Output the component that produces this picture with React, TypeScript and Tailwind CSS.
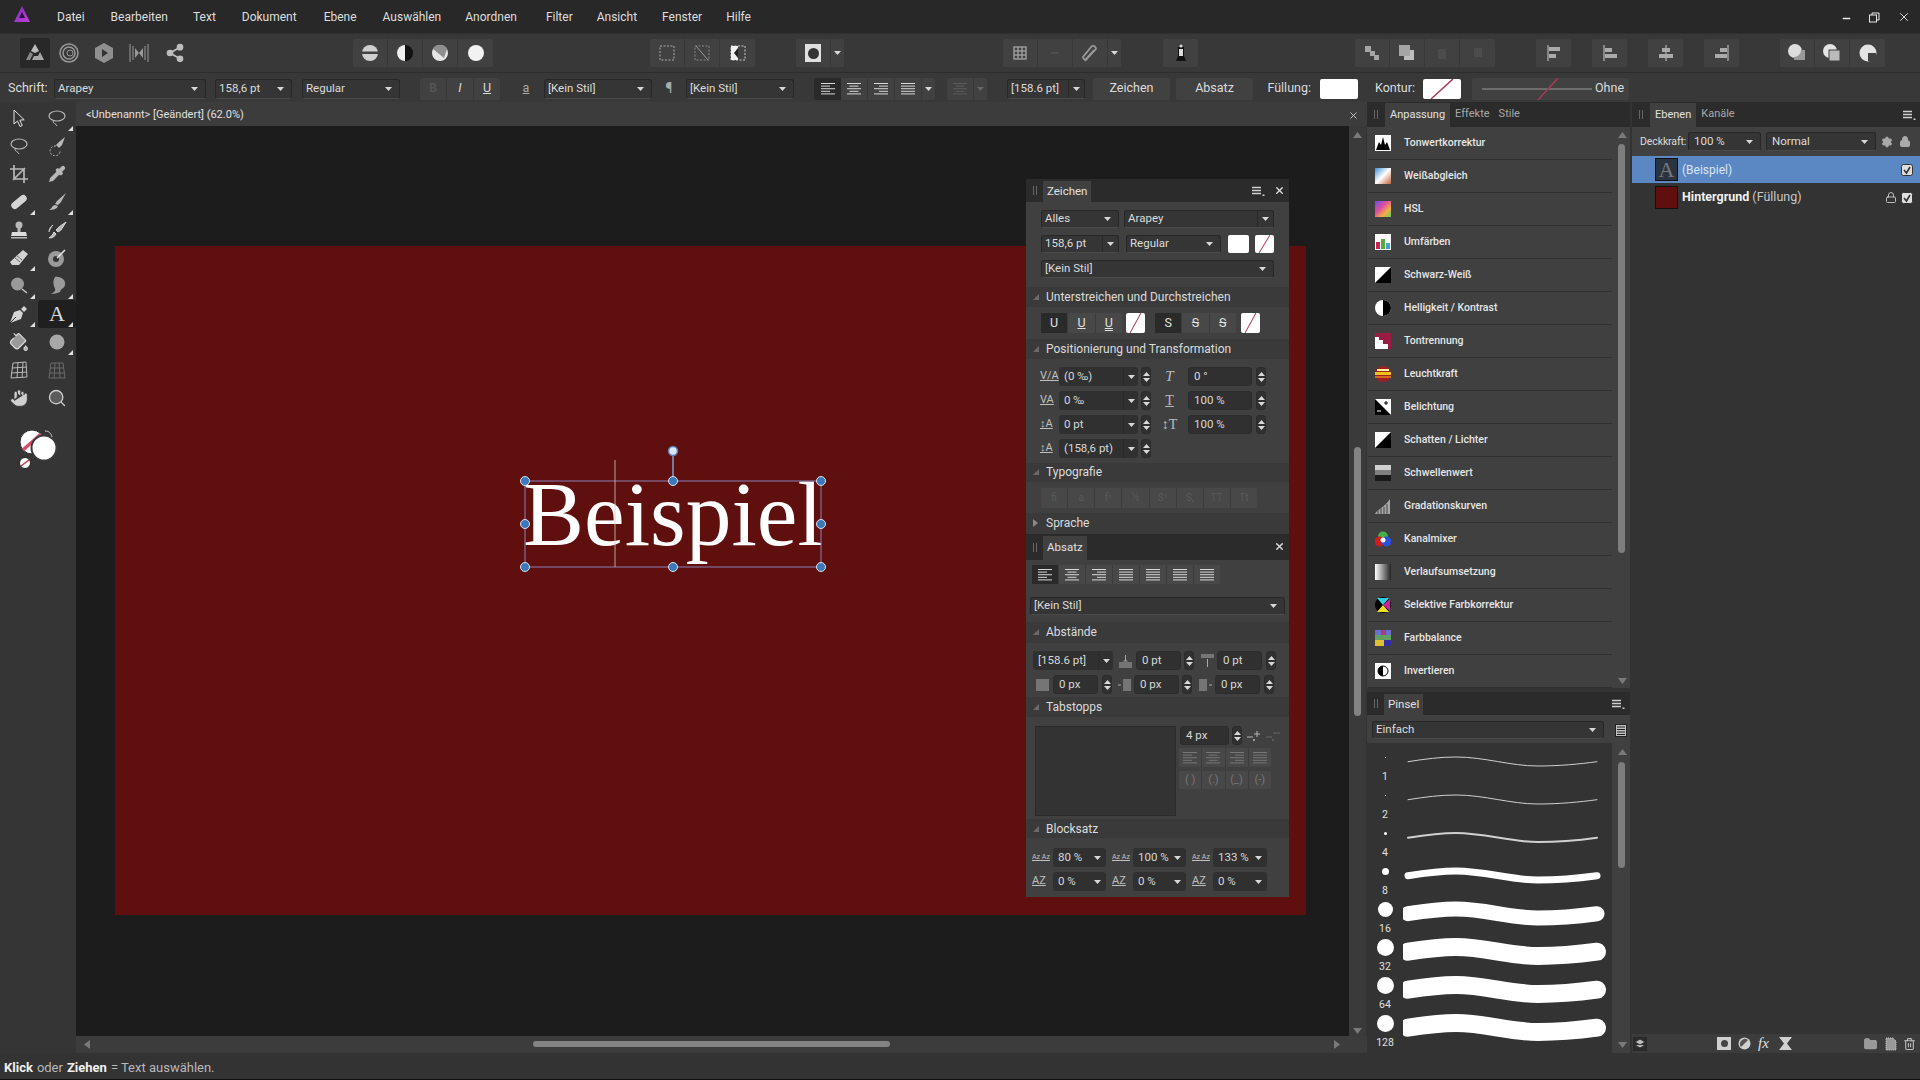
import type { ReactNode } from 'react';
import { Share2, Pipette, PaintBucket, Hand, Search, Lock, Settings, Trash2, Folder, X, Minus } from 'lucide-react';

function Caret({ className = 'text-[#d8d8d8]' }: { className?: string }) {
  return (
    <svg width="7" height="4" viewBox="0 0 7 4" className={`shrink-0 ${className}`}>
      <path d="M0 0h7L3.5 4z" fill="currentColor" />
    </svg>
  );
}

function MenuIc({ className }: { className: string }) {
  return (
    <svg width="13" height="11" viewBox="0 0 13 11" className={`shrink-0 ${className}`}>
      <path d="M0 1.500h9M0 4.500h9M0 7.500h9" stroke="#cfcfcf" strokeWidth="1.500" />
      <rect x="10.500" y="8.500" width="2" height="1.500" fill="#cfcfcf" />
    </svg>
  );
}

function Slash() {
  return (
    <svg viewBox="0 0 38 20" preserveAspectRatio="none" className="w-full h-full">
      <line x1="8" y1="20" x2="30" y2="0" stroke="#a93a55" strokeWidth="1.5" />
    </svg>
  );
}

function Swatch({ className, slash }: { className: string; slash?: boolean }) {
  return <div className={`bg-white rounded-[2px] shrink-0 overflow-hidden ${className}`}>{slash && <Slash />}</div>;
}

function Select({ className, children, split, h = 'h-[20px]' }: { className: string; children: ReactNode; split?: boolean; h?: string }) {
  return (
    <div className={`${className} ${h} shrink-0 flex items-center justify-between bg-[#353535] border border-[#272727] border-b-[#4a4a4a] rounded-[3px] pl-[3px] text-[11.500px] text-[#dcdcdc]`}>
      <span className="whitespace-nowrap">{children}</span>
      {split ? (
        <span className="h-full w-[16px] border-l border-[#2a2a2a] flex items-center justify-center">
          <Caret />
        </span>
      ) : (
        <span className="pr-[7px] flex">
          <Caret />
        </span>
      )}
    </div>
  );
}

function Field({ className, children }: { className: string; children: ReactNode }) {
  return (
    <div className={`${className} h-[19px] shrink-0 flex items-center bg-[#303030] rounded-[3px] border border-[#2c2c2c] pl-[5px] text-[11.500px] text-[#d8d8d8] whitespace-nowrap`}>
      {children}
    </div>
  );
}

function Spin({ className = '' }: { className?: string }) {
  return (
    <div className={`${className} w-[10px] h-[19px] shrink-0 bg-[#303030] rounded-[3px] border border-[#2c2c2c] flex flex-col items-center justify-center gap-[2px]`}>
      <Caret className="text-[#d8d8d8] rotate-180" />
      <Caret />
    </div>
  );
}

function ToolBtn({ children, w = 'w-[35px]' }: { children?: ReactNode; w?: string }) {
  return <div className={`${w} h-full border-r border-[#383838] last:border-r-0 flex items-center justify-center`}>{children}</div>;
}

function ToolGroup({ className = '', children }: { className?: string; children: ReactNode }) {
  return <div className={`${className} h-[28px] flex bg-[#414141] rounded-[2px] shrink-0`}>{children}</div>;
}

function Lines({ type = 'left', color = '#d8d8d8' }: { type?: 'left' | 'center' | 'right' | 'full'; color?: string }) {
  const ws = type === 'full' ? [14, 14, 14, 14, 14] : [14, 9, 14, 9, 14];
  return (
    <svg width="14" height="12" viewBox="0 0 14 12">
      {ws.map((w, i) => {
        const x = type === 'left' || type === 'full' ? 0 : type === 'center' ? (14 - w) / 2 : 14 - w;
        return <rect key={i} x={x} y={i * 2.6} width={w} height="1" fill={color} />;
      })}
    </svg>
  );
}

function Section({ title, className = 'h-[20px]', closed }: { title: string; className?: string; closed?: boolean }) {
  return (
    <div className={`${className} bg-[#3a3a3a] flex items-center text-[12px] text-[#dcdcdc]`}>
      <span className="w-[20px] flex justify-start pl-[7px]">
        {closed ? (
          <svg width="5" height="8" viewBox="0 0 5 8"><path d="M0 0l5 4-5 4z" fill="#8a8a8a" /></svg>
        ) : (
          <svg width="6" height="6" viewBox="0 0 6 6"><path d="M6 0v6H0z" fill="#6a6a6a" /></svg>
        )}
      </span>
      {title}
    </div>
  );
}

function Grip({ w = 'w-[19px]' }: { w?: string }) {
  return (
    <span className={`${w} h-full flex items-center justify-center gap-[2px] shrink-0`}>
      <span className="w-px h-[9px] bg-[#666]" />
      <span className="w-px h-[9px] bg-[#666]" />
    </span>
  );
}

function PanelHead({ title, close, menu }: { title: string; close?: boolean; menu?: string }) {
  return (
    <div className="h-[23px] bg-[#2b2b2b] flex items-end shrink-0">
      <Grip w="w-[17px]" />
      <div className="h-[21px] px-[4px] bg-[#404040] text-[11.500px] text-[#e0e0e0] flex items-center">{title}</div>
      <div className="flex-1" />
      {menu && <MenuIc className={menu} />}
      {close && <X className="w-[11px] h-[11px] text-[#dddddd] mb-[6px] mr-[4px]" strokeWidth={3} />}
    </div>
  );
}

const F = '#b8b8b8';

function Tool({ icon, corner, active }: { icon: ReactNode; corner?: boolean; active?: boolean }) {
  return (
    <div className={`relative w-[38px] h-[28px] flex items-center justify-center ${active ? 'bg-[#1f1f1f] rounded-[3px]' : ''}`}>
      {icon}
      {corner && <span className="absolute right-[3px] bottom-[1px] w-0 h-0 border-l-[5px] border-l-transparent border-b-[5px] border-b-[#e0e0e0]" />}
    </div>
  );
}

const Ic = ({ children }: { children: ReactNode }) => (
  <svg width="20" height="20" viewBox="0 0 20 20" fill="none">{children}</svg>
);

const tools: { icon: ReactNode; corner?: boolean; active?: boolean }[] = [
  { icon: <Ic><path d="M5 2v14l3.5-3 2.5 5.5 2.3-1-2.5-5.300 4.400-.4z" fill="#333" stroke="#e4e4e4" /></Ic> },
  { icon: <Ic><ellipse cx="10" cy="8" rx="8" ry="5" stroke={F} strokeWidth="1.200" /><path d="M6 13c0 3 3 2 4 5" stroke={F} /></Ic>, corner: true },
  { icon: <Ic><ellipse cx="10" cy="8" rx="8" ry="5" stroke={F} strokeWidth="1.200" /><path d="M6 13c0 3 3 2 4 5" stroke={F} /></Ic> },
  { icon: <Ic><path d="M18 1l-3 8-3 3-3-3 3-3z" fill={F} /><path d="M9 10a5 5 0 1 0 4 4" stroke={F} strokeDasharray="2 1.500" /></Ic> },
  { icon: <Ic><path d="M5 1v14h14M1 5h14v14M4 16L16 4" stroke={F} strokeWidth="1.700" /></Ic> },
  { icon: <Pipette className="w-[18px] h-[18px] text-[#b8b8b8]" fill="#b8b8b8" strokeWidth={1.4} /> },
  { icon: <Ic><rect x="1" y="6.500" width="18" height="7" rx="3.500" fill="#d4d4d4" transform="rotate(-40 10 10)" /></Ic>, corner: true },
  { icon: <Ic><path d="M19 1L10 9l-2 3 3 1 3-3zM8 13l3 1c-1 3-5 4-9 4 3-1 3-5 6-5z" fill={F} /></Ic>, corner: true },
  { icon: <Ic><circle cx="10" cy="5" r="3.500" fill={F} /><rect x="8.500" y="7" width="3" height="5" fill={F} /><path d="M3 12h14l1 4H2z" fill="#dcdcdc" /><rect x="2" y="17" width="16" height="1.500" fill={F} /></Ic> },
  { icon: <Ic><path d="M19 2l-7 5-3 3 2 2 3-2zM6 5C3 7 2 10 2 12M2 18c4 0 6-2 7-4l-2-2c-1 3-3 4-5 6z" stroke="#ddd" fill={F} /></Ic> },
  { icon: <Ic><path d="M14 2l5 4-9 11-7 0-2-3z" fill="#d4d4d4" /><path d="M5 9l6 5M7 7l6 5" stroke="#666" /></Ic>, corner: true },
  { icon: <Ic><circle cx="9" cy="11" r="8" fill="#9a9a9a" /><circle cx="9" cy="11" r="3" fill="#333" /><path d="M10 10l8-8" stroke="#e4e4e4" strokeWidth="1.500" /></Ic> },
  { icon: <Ic><circle cx="8.500" cy="8" r="6.500" fill="#9a9a9a" /><path d="M13 13l5 4" stroke="#ccc" strokeWidth="1.400" /></Ic>, corner: true },
  { icon: <Ic><path d="M8 1c6-1 11 3 10 8-1 4-4 3-5 7-3 1-5 2-9 2 3-2 5-3 4-5-1-3-3-7 0-12z" fill="#9a9a9a" /></Ic>, corner: true },
  { icon: <Ic><path d="M1 19l4-11 6-2 3 3-2 6zM12 5l3-3 3 3-3 3z" fill="#d4d4d4" /><path d="M1 19l6-6" stroke="#333" /></Ic>, corner: true },
  { icon: <span className="text-[22px] leading-none text-[#d8d8d8] font-['Liberation_Serif',serif]">A</span>, corner: true, active: true },
  { icon: <PaintBucket className="w-[20px] h-[20px] text-[#dcdcdc]" fill="#9a9a9a" strokeWidth={1.4} /> },
  { icon: <Ic><circle cx="10" cy="10" r="7.500" fill="#a8a8a8" /></Ic>, corner: true },
  { icon: <Ic><path d="M4 3l13-1 1 15-16 1zM9 2.500L8 18M14 2l-1 16M3 8l15-1M2 13l16-1" stroke={F} /></Ic> },
  { icon: <Ic><path d="M4 3h12l2 15H2zM8 3l-1 15M12 3l1 15M3 8h14M2.500 13h15" stroke="#6a6a6a" /></Ic> },
  { icon: <Hand className="w-[20px] h-[20px] text-[#333]" fill="#cfcfcf" strokeWidth={1} /> },
  { icon: <Search className="w-[20px] h-[20px] text-[#cfcfcf]" fill="#5b5b5b" strokeWidth={1.6} /> },
];

const menus: [string, string][] = [
  ['Datei', 'ml-[57px]'],
  ['Bearbeiten', 'ml-[26px]'],
  ['Text', 'ml-[25px]'],
  ['Dokument', 'ml-[26px]'],
  ['Ebene', 'ml-[27px]'],
  ['Auswählen', 'ml-[26px]'],
  ['Anordnen', 'ml-[24px]'],
  ['Filter', 'ml-[29px]'],
  ['Ansicht', 'ml-[24px]'],
  ['Fenster', 'ml-[25px]'],
  ['Hilfe', 'ml-[24px]'],
];

function MenuBar() {
  return (
    <div className="relative h-[33px] bg-[#282828] flex items-center pt-[1px] text-[12px] text-[#dedede] shrink-0">
      <svg width="18" height="18" viewBox="0 0 18 18" className="absolute left-[13px] top-[6px]">
        <defs>
          <linearGradient id="logo" x1="0" y1="0" x2="1" y2="1">
            <stop offset="0" stopColor="#7a2fb8" />
            <stop offset="1" stopColor="#c040d8" />
          </linearGradient>
        </defs>
        <path d="M9 0l8 16H1z" fill="url(#logo)" />
        <path d="M9 6l3 6H6z" fill="#2f123f" />
      </svg>
      {menus.map(([m, c]) => (
        <span key={m} className={c}>{m}</span>
      ))}
      <div className="ml-auto flex items-center text-[#e8e8e8]">
        <Minus className="w-[11px] h-[11px] mr-[17px] mt-[3px]" strokeWidth={3} />
        <svg width="11" height="11" viewBox="0 0 11 11" className="mr-[17px]" fill="none" stroke="currentColor">
          <rect x="0.500" y="3" width="7" height="7" />
          <path d="M3 3V1h7v7H8" />
        </svg>
        <X className="w-[14px] h-[14px] mr-[9px]" strokeWidth={1.6} />
      </div>
    </div>
  );
}

function ToolBar() {
  const Shape = ({ children }: { children: ReactNode }) => (
    <svg width="22" height="22" viewBox="0 0 22 22" fill="none">{children}</svg>
  );
  return (
    <div className="h-[40px] bg-[#383838] border-t border-[#2f2f2f] border-b border-b-[#2d2d2d] flex items-center pl-[17px] shrink-0">
      <div className="h-[30px] flex shrink-0 items-center">
        <div className="w-[35px] h-full flex items-center justify-center">
          <div className="w-[30px] h-[30px] bg-[#282828] rounded-[2px] flex items-center justify-center">
            <Shape>
              <path d="M11 2l4 7-4 2-4-2z" fill="#bbb" />
              <path d="M6 10l3 2-3 6H2z" fill="#888" />
              <path d="M16 10l4 8H8l2-4h4z" fill="#a8a8a8" />
            </Shape>
          </div>
        </div>
        <ToolBtn><Shape><circle cx="11" cy="11" r="9" stroke="#999" strokeWidth="1.500" /><circle cx="11" cy="11" r="6" stroke="#999" strokeWidth="1.500" /><circle cx="12" cy="11" r="3" stroke="#999" /></Shape></ToolBtn>
        <ToolBtn><Shape><path d="M11 1l9 5v10l-9 5-9-5V6z" fill="#8f8f8f" /><path d="M9 7l6 4-6 4z" fill="#333" /></Shape></ToolBtn>
        <ToolBtn><Shape><path d="M2 2v18M5 4v14M17 4v14M20 2v18" stroke="#999" /><path d="M7 6l4 5 4-5v10l-4-5-4 5z" fill="#999" /></Shape></ToolBtn>
        <ToolBtn><Share2 className="w-[20px] h-[20px] text-[#bdbdbd]" fill="#bdbdbd" /></ToolBtn>
      </div>

      <ToolGroup className="ml-[161px]">
        <ToolBtn><Shape><circle cx="11" cy="11" r="8" fill="#cfcfcf" /><rect x="3" y="9.500" width="16" height="2.500" fill="#414141" /></Shape></ToolBtn>
        <ToolBtn><Shape><circle cx="11" cy="11" r="8" fill="#111" /><path d="M11 3a8 8 0 0 0 0 16z" fill="#eee" /></Shape></ToolBtn>
        <ToolBtn><Shape><circle cx="11" cy="11" r="8" fill="#e6e6e6" /><path d="M4 7a8 8 0 0 1 14 0l-3 9z" fill="#8f8f8f" /></Shape></ToolBtn>
        <ToolBtn><Shape><circle cx="11" cy="11" r="8" fill="#f2f2f2" /></Shape></ToolBtn>
      </ToolGroup>

      <ToolGroup className="ml-[157px]">
        <ToolBtn><Shape><rect x="4" y="4" width="14" height="14" stroke="#aaa" strokeDasharray="2 1.500" /></Shape></ToolBtn>
        <ToolBtn><Shape><rect x="4" y="4" width="14" height="14" stroke="#888" strokeDasharray="2 1.500" /><path d="M5 4l12 14" stroke="#999" /></Shape></ToolBtn>
        <ToolBtn><Shape><rect x="4" y="4" width="14" height="14" stroke="#ccc" strokeDasharray="2 1.500" /><path d="M4 4h7v14H4z" fill="#f0f0f0" /><path d="M11 6l-4 5 4 5z" fill="#222" /></Shape></ToolBtn>
      </ToolGroup>

      <ToolGroup className="ml-[41px]">
        <ToolBtn><div className="w-[16px] h-[18px] bg-[#e0e0e0] flex items-center justify-center"><div className="w-[11px] h-[11px] rounded-full bg-[#333]" /></div></ToolBtn>
        <ToolBtn w="w-[13px]"><Caret /></ToolBtn>
      </ToolGroup>

      <ToolGroup className="ml-[159px]">
        <ToolBtn><Shape><path d="M5 5h12v12H5zM9 5v12M13 5v12M5 9h12M5 13h12" stroke="#999" strokeWidth="1.500" /></Shape></ToolBtn>
        <ToolBtn><Shape><path d="M7 11h8" stroke="#555" strokeWidth="1.500" /></Shape></ToolBtn>
        <ToolBtn><Shape><path d="M6 19L17 7a3 3 0 0 0-4-3L4 15a2 2 0 0 0 3 2l8-9" stroke="#999" strokeWidth="1.800" /></Shape></ToolBtn>
        <ToolBtn w="w-[13px]"><Caret /></ToolBtn>
      </ToolGroup>

      <ToolGroup className="ml-[42px]">
        <ToolBtn><Shape><path d="M8 5h6v9l2 5H6l2-5z" fill="#111" /><rect x="9" y="7" width="4" height="7" fill="#ddd" /><circle cx="11" cy="4" r="1.500" fill="#ddd" /></Shape></ToolBtn>
      </ToolGroup>

      <ToolGroup className="ml-[157px]">
        <ToolBtn><Shape><path d="M4 4h6v6H4zM9 9h5v5H9zM13 13h5v5h-5z" fill="#a5a5a5" /></Shape></ToolBtn>
        <ToolBtn><Shape><path d="M3 3h11v11H3z" fill="#a5a5a5" /><path d="M14 8h4v10H8v-4h6z" fill="#bdbdbd" /></Shape></ToolBtn>
        <ToolBtn><Shape><rect x="7" y="7" width="8" height="10" fill="#4c4c4c" /></Shape></ToolBtn>
        <ToolBtn><Shape><rect x="7" y="6" width="8" height="9" fill="#4c4c4c" /></Shape></ToolBtn>
      </ToolGroup>

      {[
        <><path d="M5 3v16" stroke="#ccc" /><path d="M6 5h11v4H6zM6 12h7v4H6z" fill="#aaa" /></>,
        <><path d="M5 3v16" stroke="#ccc" /><path d="M6 6h7v4H6zM6 12h12v4H6z" fill="#aaa" /></>,
        <><path d="M11 3v16" stroke="#ccc" /><path d="M7 6h8v4H7zM4 12h14v4H4z" fill="#aaa" /></>,
        <><path d="M17 3v16" stroke="#ccc" /><path d="M9 6h7v4H9zM4 12h12v4H4z" fill="#aaa" /></>,
      ].map((s, i) => (
        <ToolGroup key={i} className={i === 0 ? 'ml-[41px]' : 'ml-[21px]'}>
          <ToolBtn><Shape>{s}</Shape></ToolBtn>
        </ToolGroup>
      ))}

      <ToolGroup className="ml-[41px]">
        <ToolBtn><Shape><circle cx="9" cy="9" r="7" fill="#ddd" /><path d="M15 8h4v10H8v-3a7 7 0 0 0 7-7z" fill="#999" /></Shape></ToolBtn>
        <ToolBtn><Shape><circle cx="9" cy="9" r="7" fill="#e4e4e4" /><rect x="8" y="8" width="11" height="11" fill="#bbb" stroke="#414141" /></Shape></ToolBtn>
        <ToolBtn><Shape><circle cx="11" cy="11" r="8.500" fill="#e4e4e4" /><path d="M11 11h8v8h-8z" fill="#414141" /></Shape></ToolBtn>
      </ToolGroup>
    </div>
  );
}

function ContextBar() {
  return (
    <div className="h-[29px] bg-[#383838] flex items-center pl-[8px] pt-[2px] text-[12.500px] text-[#dcdcdc] shrink-0">
      <span className="w-[46px]">Schrift:</span>
      <Select className="w-[152px]">Arapey</Select>
      <Select className="w-[77px] ml-[9px]">158,6 pt</Select>
      <Select className="w-[98px] ml-[10px]">Regular</Select>
      <div className="ml-[20px] w-[80px] h-[22px] flex bg-[#414141] rounded-[2px] shrink-0">
        <div className="flex-1 flex items-center justify-center text-[#555] font-bold">B</div>
        <div className="flex-1 flex items-center justify-center border-x border-[#383838] italic">I</div>
        <div className="flex-1 flex items-center justify-center underline">U</div>
      </div>
      <span className="ml-[20px] w-[12px] text-center underline text-[#aaa]">a</span>
      <Select className="w-[108px] ml-[12px]">[Kein Stil]</Select>
      <span className="w-[34px] text-center text-[#aaa] text-[14px]">¶</span>
      <Select className="w-[108px]">[Kein Stil]</Select>
      <div className="ml-[20px] w-[121px] h-[22px] flex bg-[#414141] rounded-[2px] shrink-0">
        <div className="w-[27px] bg-[#2a2a2a] flex items-center justify-center rounded-l-[2px]"><Lines /></div>
        <div className="w-[27px] flex items-center justify-center border-r border-[#383838]"><Lines type="center" /></div>
        <div className="w-[27px] flex items-center justify-center border-r border-[#383838]"><Lines type="right" /></div>
        <div className="w-[27px] flex items-center justify-center border-r border-[#383838]"><Lines type="full" /></div>
        <div className="flex-1 flex items-center justify-center"><Caret /></div>
      </div>
      <div className="ml-[12px] w-[40px] h-[22px] flex bg-[#414141] rounded-[2px] shrink-0">
        <div className="w-[27px] flex items-center justify-center border-r border-[#383838]"><Lines type="center" color="#5c5c5c" /></div>
        <div className="flex-1 flex items-center justify-center"><Caret className="text-[#666]" /></div>
      </div>
      <Select className="w-[78px] ml-[20px]" split>[158.6 pt]</Select>
      <div className="ml-[8px] w-[77px] h-[22px] bg-[#414141] rounded-[2px] flex items-center justify-center shrink-0">Zeichen</div>
      <div className="ml-[6px] w-[77px] h-[22px] bg-[#414141] rounded-[2px] flex items-center justify-center shrink-0">Absatz</div>
      <span className="w-[67px] text-right pr-[9px] shrink-0">Füllung:</span>
      <Swatch className="w-[38px] h-[20px]" />
      <span className="ml-[17px] w-[48px] shrink-0">Kontur:</span>
      <Swatch className="w-[38px] h-[20px]" slash />
      <div className="ml-[11px] w-[157px] h-[22px] bg-[#414141] rounded-[2px] flex items-center pl-[10px] gap-[3px] shrink-0">
        <svg width="110" height="22" viewBox="0 0 110 22" className="shrink-0">
          <line x1="0" y1="11" x2="110" y2="11" stroke="#999" />
          <line x1="56" y1="22" x2="76" y2="0" stroke="#a93a55" strokeWidth="1.500" />
        </svg>
        Ohne
      </div>
    </div>
  );
}

function ToolsColumn() {
  return (
    <div className="w-[76px] shrink-0 bg-[#353535] pt-[2px]">
      <div className="grid grid-cols-2">
        {tools.map((t, i) => (
          <Tool key={i} {...t} />
        ))}
      </div>
      <svg width="60" height="52" viewBox="0 0 60 52" className="mt-[18px] ml-[12px]">
        <circle cx="20" cy="12" r="12" fill="#fff" stroke="#2b2b2b" />
        <path d="M11 20L29 4" stroke="#d0506a" strokeWidth="3.500" />
        <circle cx="32" cy="18" r="12.500" fill="#fff" stroke="#3a3a3a" strokeWidth="2" />
        <circle cx="13" cy="33" r="5.500" fill="#fff" stroke="#222" />
        <path d="M9 36l8-6" stroke="#b93b52" strokeWidth="1.500" />
        <path d="M33 1c4 0 6 2 7 6" stroke="#cfcfcf" fill="none" />
      </svg>
    </div>
  );
}

function CharacterPanel() {
  const rows: [ReactNode, string, string?, ReactNode?][] = [
    ['V/A', '(0 ‰)', '0 °', <span className="italic font-['Liberation_Serif',serif] text-[15px]">T</span>],
    ['VA', '0 ‰', '100 %', <span className="underline font-['Liberation_Serif',serif] text-[14px]">T</span>],
    ['↕A', '0 pt', '100 %', <span className="font-['Liberation_Serif',serif] text-[14px]">↕T</span>],
    ['↕A', '(158,6 pt)'],
  ];
  const typo = ['fi', 'a', 'f¹', '½', 'S¹', 'S,', 'TT', 'Tt'];
  return (
    <div className="absolute left-[950px] top-[53px] w-[263px] bg-[#404040]">
      <PanelHead title="Zeichen" close menu="mb-[5px] mr-[9px]" />
      <div className="pl-[15px] pr-[15px] pt-[8px] h-[85px]">
        <div className="flex">
          <Select className="w-[78px]" h="h-[18px]">Alles</Select>
          <Select className="w-[150px] ml-[5px]" h="h-[18px]" split>Arapey</Select>
        </div>
        <div className="flex mt-[7px] items-center">
          <Select className="w-[78px]" h="h-[18px]" split>158,6 pt</Select>
          <Select className="w-[95px] ml-[7px]" h="h-[18px]">Regular</Select>
          <Swatch className="w-[21px] h-[18px] ml-[7px]" />
          <Swatch className="w-[19px] h-[18px] ml-[6px]" slash />
        </div>
        <div className="mt-[7px]"><Select className="w-[233px]" h="h-[18px]">[Kein Stil]</Select></div>
      </div>
      <Section title="Unterstreichen und Durchstreichen" />
      <div className="h-[32px] flex items-center pl-[15px]">
        <div className="h-[20px] w-[81px] flex bg-[#484848] rounded-[2px] text-[12.500px] text-[#e0e0e0] shrink-0">
          <div className="flex-1 bg-[#2a2a2a] flex items-center justify-center">U</div>
          <div className="flex-1 border-x border-[#3c3c3c] flex items-center justify-center underline">U</div>
          <div className="flex-1 flex items-center justify-center underline decoration-double">U</div>
        </div>
        <Swatch className="w-[19px] h-[20px] ml-[4px]" slash />
        <div className="h-[20px] w-[81px] ml-[10px] flex bg-[#484848] rounded-[2px] text-[12.500px] text-[#e0e0e0] shrink-0">
          <div className="flex-1 bg-[#2a2a2a] flex items-center justify-center">S</div>
          <div className="flex-1 border-x border-[#3c3c3c] flex items-center justify-center line-through">S</div>
          <div className="flex-1 flex items-center justify-center line-through">S</div>
        </div>
        <Swatch className="w-[19px] h-[20px] ml-[5px]" slash />
      </div>
      <Section title="Positionierung und Transformation" />
      <div className="h-[104px] pt-[8px] pl-[14px] flex flex-col gap-[5px]">
        {rows.map(([ic, v, v2, ic2], i) => (
          <div key={i} className="flex items-center">
            <span className="w-[19px] text-[11px] text-[#c0c0c0] whitespace-nowrap underline">{ic}</span>
            <div className="w-[79px] h-[19px] bg-[#303030] rounded-[3px] flex items-center justify-between pl-[5px] text-[11.500px] text-[#d8d8d8] shrink-0">
              {v}
              <span className="w-[15px] h-full border-l border-[#2a2a2a] flex items-center justify-center"><Caret /></span>
            </div>
            <Spin className="ml-[3px]" />
            {v2 && (
              <>
                <span className="w-[37px] text-center text-[#bbb] text-[12px] leading-none">{ic2}</span>
                <Field className="w-[64px]">{v2}</Field>
                <Spin className="ml-[4px]" />
              </>
            )}
          </div>
        ))}
      </div>
      <Section title="Typografie" className="h-[19px] pb-[2px]" />
      <div className="h-[31px] flex items-center pl-[15px]">
        <div className="h-[20px] w-[216px] flex bg-[#484848] rounded-[2px] text-[10px] text-[#5a5a5a]">
          {typo.map(t => (
            <div key={t} className="flex-1 border-r border-[#3c3c3c] last:border-r-0 flex items-center justify-center">{t}</div>
          ))}
        </div>
      </div>
      <Section title="Sprache" className="h-[21px] pb-[1px]" closed />
    </div>
  );
}

function SpaceIc({ kind }: { kind: 'before' | 'after' | 'leading' | 'left' | 'right' }) {
  return (
    <svg width="15" height="14" viewBox="0 0 15 14">
      {kind === 'before' && <><path d="M1 9h13M1 11h13M1 13h13" stroke="#aaa" /><path d="M7.500 1v6M5.500 7h4" stroke="#aaa" /></>}
      {kind === 'after' && <><path d="M1 1h13M1 3h13" stroke="#aaa" /><path d="M7.500 5v8" stroke="#aaa" /></>}
      {kind === 'leading' && <path d="M1 2h13M1 4h13M1 6h13M1 8h13M1 10h13M1 12h13" stroke="#aaa" />}
      {kind === 'left' && <><path d="M6 2h8M6 4h8M6 6h8M6 8h8M6 10h8M6 12h8" stroke="#aaa" /><path d="M1 7h3" stroke="#aaa" /></>}
      {kind === 'right' && <><path d="M1 2h8M1 4h8M1 6h8M1 8h8M1 10h8M1 12h8" stroke="#aaa" /><path d="M11 7h3" stroke="#aaa" /></>}
    </svg>
  );
}

function ParagraphPanel() {
  const aligns: ('left' | 'center' | 'right' | 'full')[] = ['left', 'center', 'right', 'full', 'full', 'full', 'full'];
  const IconCell = ({ children }: { children: ReactNode }) => (
    <span className="w-[18px] h-[16px] flex items-center justify-center shrink-0">{children}</span>
  );
  const Az = ({ text }: { text: string }) => (
    <span className={`w-[21px] ${text === 'AZ' ? 'text-[11px]' : 'text-[7px]'} text-[#c0c0c0] underline shrink-0 whitespace-nowrap`}>{text}</span>
  );
  const Drop = ({ className, children }: { className: string; children: ReactNode }) => (
    <div className={`${className} h-[19px] bg-[#303030] rounded-[3px] flex items-center justify-between pl-[5px] pr-[5px] text-[11.500px] text-[#d8d8d8] shrink-0`}>
      {children}
      <Caret />
    </div>
  );
  return (
    <div className="absolute left-[950px] top-[408px] w-[263px] h-[363px] bg-[#404040]">
      <div className="h-[26px] bg-[#2b2b2b] flex items-end">
        <Grip w="w-[17px]" />
        <div className="h-[24px] px-[4px] bg-[#404040] text-[11.500px] text-[#e0e0e0] flex items-center">Absatz</div>
        <div className="flex-1" />
        <X className="w-[11px] h-[11px] text-[#dddddd] mb-[8px] mr-[4px]" strokeWidth={3} />
      </div>
      <div className="h-[62px] pl-[6px] pt-[5px]">
        <div className="flex h-[19px] w-[188px] bg-[#484848] rounded-[2px]">
          {aligns.map((a, i) => (
            <div key={i} className={`flex-1 flex items-center justify-center border-r border-[#3c3c3c] last:border-r-0 ${i === 0 ? 'bg-[#2a2a2a]' : ''}`}><Lines type={a} /></div>
          ))}
        </div>
        <div className="mt-[13px] -ml-[2px]"><Select className="w-[255px]" h="h-[18px]">[Kein Stil]</Select></div>
      </div>
      <Section title="Abstände" className="h-[21px] pb-[2px]" />
      <div className="h-[54px] pl-[7px] pt-[8px] flex flex-col gap-[5px]">
        <div className="flex items-center">
          <div className="w-[80px] h-[19px] bg-[#303030] rounded-[3px] flex items-center justify-between pl-[5px] text-[11.500px] text-[#d8d8d8] shrink-0">
            [158.6 pt]
            <span className="w-[15px] h-full border-l border-[#2a2a2a] flex items-center justify-center"><Caret /></span>
          </div>
          <span className="ml-[3px]"><IconCell><SpaceIc kind="before" /></IconCell></span>
          <Field className="w-[45px] ml-[2px]">0 pt</Field>
          <Spin className="ml-[3px]" />
          <span className="ml-[4px]"><IconCell><SpaceIc kind="after" /></IconCell></span>
          <Field className="w-[45px] ml-[1px]">0 pt</Field>
          <Spin className="ml-[4px]" />
        </div>
        <div className="flex items-center">
          <IconCell><SpaceIc kind="leading" /></IconCell>
          <Field className="w-[45px] ml-[2px]">0 px</Field>
          <Spin className="ml-[4px]" />
          <span className="ml-[3px]"><IconCell><SpaceIc kind="left" /></IconCell></span>
          <Field className="w-[45px] ml-[1px]">0 px</Field>
          <Spin className="ml-[3px]" />
          <span className="ml-[4px]"><IconCell><SpaceIc kind="right" /></IconCell></span>
          <Field className="w-[45px] ml-[1px]">0 px</Field>
          <Spin className="ml-[4px]" />
        </div>
      </div>
      <Section title="Tabstopps" className="h-[20px] pb-[1px]" />
      <div className="h-[102px] flex pl-[9px] pt-[9px]">
        <div className="w-[141px] h-[90px] bg-[#333] border border-[#2b2b2b] shrink-0" />
        <div className="ml-[3px]">
          <div className="flex items-center">
            <Field className="w-[49px] ml-[1px]">4 px</Field>
            <Spin className="ml-[3px]" />
            <svg width="15" height="12" viewBox="0 0 15 12" className="ml-[5px]">
              <path d="M0 7h6M10 1v6M7 4h6" stroke="#b5b5b5" />
              <circle cx="7" cy="10" r="1" fill="#b5b5b5" />
            </svg>
            <svg width="15" height="12" viewBox="0 0 15 12" className="ml-[4px]">
              <path d="M0 7h6M7 3h7" stroke="#666" />
              <circle cx="7" cy="10" r="1" fill="#666" />
            </svg>
          </div>
          <div className="mt-[3px] flex w-[92px] h-[19px] bg-[#484848] rounded-[2px]">
            {(['left', 'center', 'right', 'full'] as const).map(t => (
              <div key={t} className="flex-1 border-r border-[#3c3c3c] last:border-r-0 flex items-center justify-center"><Lines type={t} color="#777" /></div>
            ))}
          </div>
          <div className="mt-[4px] flex w-[92px] h-[18px] bg-[#484848] rounded-[2px] text-[11px] text-[#777]">
            {['( )', '(.)', '(_)', '(-)'].map(t => (
              <div key={t} className="flex-1 border-r border-[#3c3c3c] last:border-r-0 flex items-center justify-center">{t}</div>
            ))}
          </div>
        </div>
      </div>
      <Section title="Blocksatz" className="h-[19px]" />
      <div className="pl-[6px] pt-[10px] flex flex-col gap-[5px]">
        <div className="flex items-center">
          <Az text="Az Az" /><Drop className="w-[53px]">80 %</Drop>
          <span className="ml-[6px]" /><Az text="Az Az" /><Drop className="w-[53px]">100 %</Drop>
          <span className="ml-[6px]" /><Az text="Az Az" /><Drop className="w-[54px]">133 %</Drop>
        </div>
        <div className="flex items-center">
          <Az text="AZ" /><Drop className="w-[53px]">0 %</Drop>
          <span className="ml-[6px]" /><Az text="AZ" /><Drop className="w-[53px]">0 %</Drop>
          <span className="ml-[6px]" /><Az text="AZ" /><Drop className="w-[54px]">0 %</Drop>
        </div>
      </div>
    </div>
  );
}

function Canvas() {
  const handles = [
    [0, 0], [148, 0], [296, 0],
    [0, 43], [296, 43],
    [0, 86], [148, 86], [296, 86],
  ];
  return (
    <div className="relative flex-1 bg-[#1c1c1c] overflow-hidden">
      <div className="absolute left-[39px] top-[120px] w-[1191px] h-[669px] bg-[#5e0f0e]" />
      <span className="absolute left-[447px] top-[343px] text-[91.500px] leading-[90px] text-white font-['Liberation_Serif',serif] whitespace-nowrap">Beispiel</span>
      <svg width="320" height="140" viewBox="-10 -40 320 140" className="absolute left-[439px] top-[315px]">
        <rect x="0" y="0" width="296" height="86" fill="none" stroke="#8a80b8" />
        <line x1="148" y1="0" x2="148" y2="-30" stroke="#7b7a96" strokeWidth="2" />
        <line x1="90" y1="-21" x2="90" y2="86" stroke="#d8c8b8" strokeWidth="0.800" />
        <circle cx="148" cy="-30" r="4.500" fill="#d9e6f7" stroke="#5c7db5" strokeWidth="1.500" />
        {handles.map(([x, y]) => (
          <circle key={`${x}-${y}`} cx={x} cy={y} r="4.500" fill="#3c78bb" stroke="#d8e2f0" />
        ))}
      </svg>
      <CharacterPanel />
      <ParagraphPanel />
    </div>
  );
}

function CenterColumn() {
  return (
    <div className="w-[1291px] shrink-0 flex flex-col">
      <div className="h-[24px] bg-[#3c3c3c] flex items-center justify-between pl-[10px] pr-[8px] pt-[2px] text-[11px] text-[#e0e0e0] shrink-0">
        &lt;Unbenannt&gt; [Geändert] (62.0%)
        <X className="w-[11px] h-[11px] text-[#cccccc]" />
      </div>
      <div className="flex-1 flex min-h-0">
        <Canvas />
        <div className="relative w-[17px] bg-[#3a3a3a] mr-[1px]">
          <svg width="9" height="6" viewBox="0 0 9 6" className="absolute left-[4px] top-[6px]"><path d="M4.500 0L9 6H0z" fill="#7a7a7a" /></svg>
          <div className="absolute left-[5px] top-[321px] w-[7px] h-[269px] rounded-[4px] bg-[#838383]" />
          <svg width="9" height="6" viewBox="0 0 9 6" className="absolute left-[4px] bottom-[2px]"><path d="M4.500 6L9 0H0z" fill="#7a7a7a" /></svg>
        </div>
      </div>
      <div className="relative h-[17px] bg-[#3c3c3c] shrink-0">
        <svg width="6" height="9" viewBox="0 0 6 9" className="absolute left-[8px] top-[4px]"><path d="M0 4.500L6 0v9z" fill="#7a7a7a" /></svg>
        <div className="absolute left-[457px] top-[5px] w-[357px] h-[6px] rounded-[3px] bg-[#838383]" />
        <svg width="6" height="9" viewBox="0 0 6 9" className="absolute left-[1258px] top-[4px]"><path d="M6 4.500L0 0v9z" fill="#7a7a7a" /></svg>
      </div>
    </div>
  );
}

const AdjIc = ({ children }: { children: ReactNode }) => (
  <svg width="16" height="16" viewBox="0 0 16 16" className="shrink-0">{children}</svg>
);

const adjustments: [string, ReactNode][] = [
  ['Tonwertkorrektur', <AdjIc><rect width="16" height="16" fill="#fff" /><path d="M1 15l3-8 2 3 2-8 2 8 2-3 3 8z" fill="#000" /></AdjIc>],
  ['Weißabgleich', <AdjIc><defs><linearGradient id="wb" x1="0" y1="0" x2="1" y2="1"><stop offset="0" stopColor="#3e8fd6" /><stop offset="0.500" stopColor="#fff" /><stop offset="1" stopColor="#c0623a" /></linearGradient></defs><rect width="16" height="16" fill="url(#wb)" /></AdjIc>],
  ['HSL', <AdjIc><defs><linearGradient id="hsl" x1="0" y1="0" x2="1" y2="1"><stop offset="0" stopColor="#6a50e0" /><stop offset="0.400" stopColor="#e04ea0" /><stop offset="0.700" stopColor="#f0b040" /><stop offset="1" stopColor="#60d060" /></linearGradient></defs><rect width="16" height="16" fill="url(#hsl)" /></AdjIc>],
  ['Umfärben', <AdjIc><rect width="16" height="16" fill="#fff" /><rect x="1" y="8" width="4" height="7" fill="#c8234f" /><rect x="6" y="5" width="4" height="10" fill="#5aa83a" /><rect x="11" y="9" width="4" height="6" fill="#4a9fd8" /></AdjIc>],
  ['Schwarz-Weiß', <AdjIc><rect width="16" height="16" fill="#fff" /><path d="M16 0v16H0z" fill="#000" /></AdjIc>],
  ['Helligkeit / Kontrast', <AdjIc><circle cx="8" cy="8" r="8" fill="#fff" /><path d="M8 0a8 8 0 0 1 0 16z" fill="#000" /></AdjIc>],
  ['Tontrennung', <AdjIc><rect width="16" height="16" fill="#fff" /><path d="M0 0h16v16h-3v-5H8V7H4V4H0z" fill="#9a1c45" /></AdjIc>],
  ['Leuchtkraft', <AdjIc><circle cx="8" cy="8" r="8" fill="#a01f22" /><path d="M2 3h12v2H2z" fill="#f8f2a0" /><path d="M0 6h16v3H0z" fill="#f2c318" /><path d="M0 10h16v2H0z" fill="#d46a1c" /></AdjIc>],
  ['Belichtung', <AdjIc><rect width="16" height="16" fill="#fff" /><path d="M0 0l16 16H0z" fill="#000" /><path d="M2 12h4" stroke="#fff" /><path d="M11 2v4M9 4h4" stroke="#000" /></AdjIc>],
  ['Schatten / Lichter', <AdjIc><rect width="16" height="16" fill="#fff" /><path d="M16 0v16H0z" fill="#000" /></AdjIc>],
  ['Schwellenwert', <AdjIc><rect width="16" height="5" fill="#cfcfcf" /><rect y="5" width="16" height="5" fill="#808080" /><rect y="10" width="16" height="6" fill="#1a1a1a" /></AdjIc>],
  ['Gradationskurven', <AdjIc><path d="M0 16C2 11 8 11 15 1v15z" fill="#a8a8a8" /><path d="M3 16V12M6 16V10M9 16V9M12 16V6" stroke="#444" /></AdjIc>],
  ['Kanalmixer', <AdjIc><circle cx="8" cy="5.500" r="5" fill="#48b048" /><circle cx="4.500" cy="10.500" r="5" fill="#d01c1c" /><circle cx="11.500" cy="10.500" r="5" fill="#2a4fd8" /><circle cx="8" cy="9" r="2.500" fill="#fff" /></AdjIc>],
  ['Verlaufsumsetzung', <AdjIc><defs><linearGradient id="gm"><stop offset="0" stopColor="#fff" /><stop offset="1" stopColor="#222" /></linearGradient></defs><rect width="16" height="16" fill="url(#gm)" /></AdjIc>],
  ['Selektive Farbkorrektur', <AdjIc><circle cx="8" cy="8" r="8" fill="#000" /><path d="M8 8L2 1h12z" fill="#2cd2e0" /><path d="M8 8L2 15h12z" fill="#f0e020" /><path d="M8 8l7-6v12z" fill="#d020a0" /></AdjIc>],
  ['Farbbalance', <AdjIc><rect width="16" height="5" fill="#6a70d0" /><rect x="6" width="5" height="5" fill="#a04080" /><rect y="5" width="16" height="5" fill="#60a060" /><rect y="10" width="9" height="6" fill="#e0c030" /><rect x="9" y="10" width="7" height="6" fill="#3030a0" /></AdjIc>],
  ['Invertieren', <AdjIc><rect width="16" height="16" fill="#fff" /><path d="M8 3a5 5 0 0 0 0 10z" fill="#000" /><circle cx="8" cy="8" r="5" fill="none" stroke="#000" /></AdjIc>],
];

const brushes: [string, string, number][] = [
  ['1', 'w-[1px] h-[1px]', 1],
  ['2', 'w-[1px] h-[1px]', 1],
  ['4', 'w-[3px] h-[3px]', 2],
  ['8', 'w-[7px] h-[7px]', 7],
  ['16', 'w-[15px] h-[15px]', 15],
  ['32', 'w-[17px] h-[17px]', 18],
  ['64', 'w-[17px] h-[17px]', 18],
  ['128', 'w-[17px] h-[17px]', 18],
];

function AdjustmentPanel() {
  return (
    <div className="w-[263px] shrink-0 flex flex-col">
      <div className="h-[25px] bg-[#2b2b2b] flex items-end shrink-0 text-[11px] text-[#a8a8a8]">
        <Grip w="w-[18px]" />
        <div className="h-[24px] px-[5px] bg-[#404040] text-[#e0e0e0] flex items-center">Anpassung</div>
        <span className="ml-[5px] mb-[5px]">Effekte</span>
        <span className="ml-[9px] mb-[5px]">Stile</span>
      </div>
      <div className="relative h-[561px] flex bg-[#404040] shrink-0">
        <div className="w-[245px] pl-[1px]">
          {adjustments.map(([name, icon]) => (
            <div key={name} className="h-[33px] border-b border-[#303030] flex items-center pl-[7px] gap-[13px] text-[10.500px] font-medium text-[#e6e6e6]">
              {icon}
              {name}
            </div>
          ))}
        </div>
        <div className="relative flex-1">
          <svg width="9" height="6" viewBox="0 0 9 6" className="absolute left-[6px] top-[5px]"><path d="M4.500 0L9 6H0z" fill="#7a7a7a" /></svg>
          <div className="absolute left-[6px] top-[17px] w-[7px] h-[409px] rounded-[4px] bg-[#7d7d7d]" />
          <svg width="9" height="6" viewBox="0 0 9 6" className="absolute left-[6px] top-[551px]"><path d="M4.500 6L9 0H0z" fill="#7a7a7a" /></svg>
        </div>
      </div>
      <div className="h-[4px] bg-[#333] shrink-0" />
      <div className="flex-1 flex flex-col bg-[#404040] min-h-0">
        <PanelHead title="Pinsel" menu="mb-[5px] mr-[5px]" />
        <div className="h-[28px] flex items-center pl-[5px] pt-[2px] shrink-0">
          <Select className="w-[232px]" h="h-[18px]">Einfach</Select>
          <svg width="12" height="13" viewBox="0 0 12 13" className="ml-[11px]">
            <rect x="0.500" y="0.500" width="11" height="12" fill="#c0c0c0" stroke="#222" />
            <path d="M2 3h8M2 5.500h8M2 8h8M2 10.500h8" stroke="#222" />
          </svg>
        </div>
        <div className="flex-1 flex min-h-0">
          <div className="w-[245px] bg-[#333] overflow-hidden">
            {brushes.map(([label, dot, sw]) => (
              <div key={label} className="h-[38px] flex">
                <div className="w-[36px] flex flex-col items-center shrink-0">
                  <div className="h-[29px] flex items-center justify-center">
                    <div className={`${dot} rounded-full bg-white`} />
                  </div>
                  <div className="h-[9px] leading-[9px] text-[10.500px] text-[#e0e0e0]">{label}</div>
                </div>
                <svg width="206" height="38" viewBox="3 0 206 38" className="shrink-0">
                  <path d="M8 18.700C25 16 40 14 56 14C85 14 110 23 138 23C160 23 180 21 197 18.700" fill="none" stroke={sw < 3 ? '#d0d0d0' : '#fff'} strokeWidth={sw} strokeLinecap="round" />
                </svg>
              </div>
            ))}
          </div>
          <div className="relative flex-1">
            <svg width="9" height="6" viewBox="0 0 9 6" className="absolute left-[6px] top-[6px]"><path d="M4.500 0L9 6H0z" fill="#7a7a7a" /></svg>
            <div className="absolute left-[6px] top-[19px] w-[7px] h-[106px] rounded-[4px] bg-[#7d7d7d]" />
            <svg width="9" height="6" viewBox="0 0 9 6" className="absolute left-[6px] bottom-[5px]"><path d="M4.500 6L9 0H0z" fill="#7a7a7a" /></svg>
          </div>
        </div>
      </div>
    </div>
  );
}

function Check() {
  return (
    <svg width="12" height="12" viewBox="0 0 12 12" className="shrink-0">
      <rect x="0.500" y="0.500" width="11" height="11" rx="2" fill="#dedede" stroke="#333" />
      <path d="M3 6l2.500 3L9 3" stroke="#333" strokeWidth="1.600" fill="none" />
    </svg>
  );
}

function LayersPanel() {
  return (
    <div className="flex-1 ml-[2px] flex flex-col bg-[#333]">
      <div className="h-[25px] bg-[#2b2b2b] flex items-end shrink-0 text-[11px] text-[#a8a8a8]">
        <Grip w="w-[18px]" />
        <div className="h-[24px] px-[5px] bg-[#404040] text-[#e0e0e0] flex items-center">Ebenen</div>
        <span className="ml-[5px] mb-[5px]">Kanäle</span>
        <div className="flex-1" />
        <MenuIc className="mb-[6px] mr-[4px]" />
      </div>
      <div className="h-[29px] bg-[#404040] flex items-center pl-[8px] shrink-0 text-[10.500px] text-[#dcdcdc]">
        <span className="w-[48px] tracking-[-0.1px]">Deckkraft:</span>
        <Select className="w-[73px]" h="h-[19px]"><span className="ml-[2px]">100 %</span></Select>
        <Select className="w-[110px] ml-[5px]" h="h-[19px]"><span className="ml-[2px]">Normal</span></Select>
        <Settings className="w-[12px] h-[12px] ml-[5px] text-[#aaa]" fill="#aaa" />
        <Lock className="w-[12px] h-[13px] ml-[6px] text-[#aaa]" fill="#aaa" />
      </div>
      <div className="h-[27px] bg-[#5b87c2] flex items-center pl-[23px] pr-[7px] text-[12px] text-[#dbe6f5] shrink-0">
        <div className="w-[23px] h-[23px] bg-[#2c3340] border border-[#111] flex items-center justify-center text-[22px] leading-none text-[#777] font-['Liberation_Serif',serif]">A</div>
        <span className="ml-[4px]">(Beispiel)</span>
        <span className="ml-auto"><Check /></span>
      </div>
      <div className="h-[28px] flex items-center pl-[23px] pr-[7px] pt-[1px] text-[12.500px] text-[#c8c8c8] shrink-0">
        <div className="w-[23px] h-[23px] bg-[#5e0f0e] border border-[#111]" />
        <span className="ml-[4px] font-bold text-[#f0f0f0]">Hintergrund</span>
        <span className="ml-[3px]">(Füllung)</span>
        <Lock className="ml-auto w-[12px] h-[13px] text-[#bbb]" />
        <span className="ml-[4px]"><Check /></span>
      </div>
      <div className="flex-1" />
      <div className="h-[19px] bg-[#3c3c3c] flex items-center shrink-0 text-[#bdbdbd]">
        <svg width="14" height="14" viewBox="0 0 14 14" className="ml-[1px]">
          <rect x="0" y="0" width="14" height="14" fill="#2a2a2a" />
          <path d="M2 5l5-3 5 3-5 3zM2 8l5 3 5-3" fill="#bbb" stroke="#333" />
        </svg>
        <div className="ml-[70px] w-[14px] h-[13px] bg-[#d0d0d0] flex items-center justify-center"><div className="w-[7px] h-[7px] rounded-full bg-[#444]" /></div>
        <svg width="13" height="13" viewBox="0 0 13 13" className="ml-[7px]"><circle cx="6.500" cy="6.500" r="6" fill="#d0d0d0" /><path d="M10 3L3 10a5 5 0 0 1 7-7z" fill="#555" /></svg>
        <span className="ml-[7px] w-[16px] italic text-[15px] leading-none text-[#e0e0e0] font-['Liberation_Serif',serif]">fx</span>
        <svg width="13" height="13" viewBox="0 0 13 13" className="ml-[5px]"><path d="M0 0h13L8 6.500 13 13H0l5-6.500z" fill="#d0d0d0" /></svg>
        <div className="flex-1" />
        <Folder className="w-[15px] h-[14px] text-[#9a9a9a]" fill="#9a9a9a" />
        <svg width="12" height="14" viewBox="0 0 12 14" className="ml-[7px]"><path d="M1 1h7l3 3v9H1z" fill="#9a9a9a" stroke="#ccc" strokeDasharray="1 1" /></svg>
        <Trash2 className="w-[13px] h-[14px] ml-[6px] mr-[4px] text-[#bdbdbd]" />
      </div>
    </div>
  );
}

export default function App() {
  return (
    <div className="w-[1920px] h-[1080px] overflow-hidden flex flex-col bg-[#333] font-['Roboto',sans-serif]">
      <MenuBar />
      <ToolBar />
      <ContextBar />
      <div className="flex h-[951px] shrink-0">
        <ToolsColumn />
        <CenterColumn />
        <AdjustmentPanel />
        <LayersPanel />
      </div>
      <div className="flex-1 bg-[#333] flex items-center pl-[4px] pt-[4px] text-[13px] text-[#b8b8b8] border-b border-[#111]">
        <b className="text-[#f0f0f0]">Klick</b>
        <span className="mx-[4px]">oder</span>
        <b className="text-[#f0f0f0]">Ziehen</b>
        <span className="ml-[4px]">= Text auswählen.</span>
      </div>
    </div>
  );
}
